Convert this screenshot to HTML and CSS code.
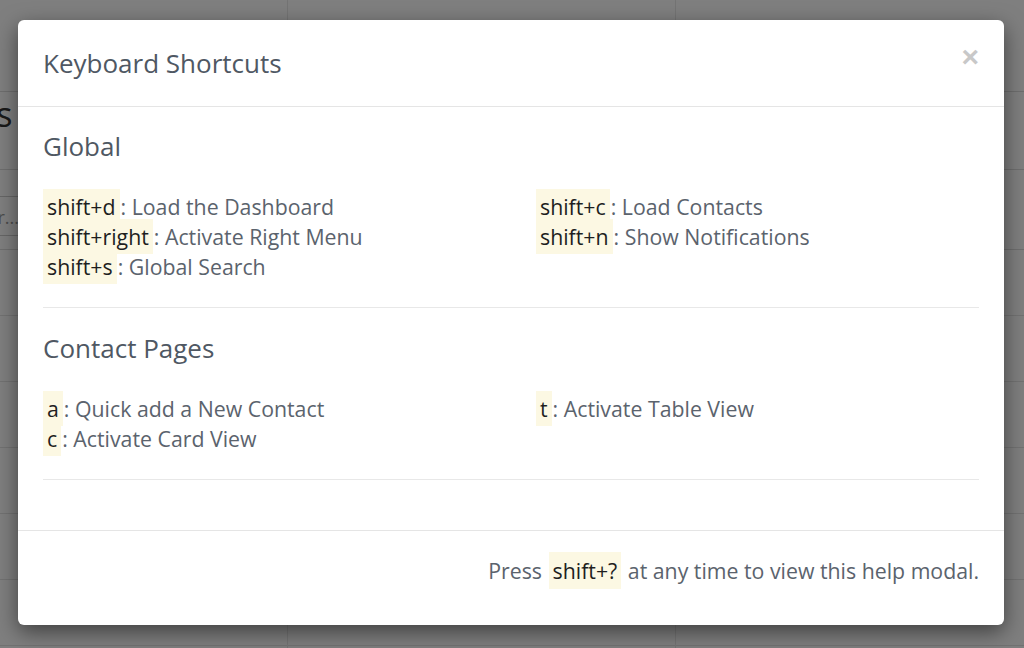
FILE: index.html
```html
<!DOCTYPE html>
<html lang="en">
<head>
<meta charset="utf-8">
<title>Keyboard Shortcuts</title>
<link rel="stylesheet" href="styles.css">
</head>
<body>
<div class="page">
  <div class="page-top"></div>
  <div class="page-title"><span>Contacts</span></div>
  <div class="page-filter"><span class="filter-input">Filter...</span></div>
  <div class="page-table">
    <div class="trow"></div>
    <div class="trow"></div>
    <div class="trow"></div>
    <div class="trow"></div>
    <div class="trow"></div>
    <div class="trow"></div>
  </div>
  <div class="page-cols">
    <div class="pcol"></div>
    <div class="pcol"></div>
    <div class="pcol"></div>
  </div>
</div>

<div class="backdrop">
  <div class="modal">
    <div class="modal-header">
      <h4 class="modal-title">Keyboard Shortcuts</h4>
      <span class="close">&times;</span>
    </div>
    <div class="modal-body">
      <section class="group">
        <h3 class="group-title">Global</h3>
        <div class="cols">
          <ul class="list">
            <li><mark class="key">shift+d</mark>: Load the Dashboard</li>
            <li><mark class="key">shift+right</mark>: Activate Right Menu</li>
            <li><mark class="key">shift+s</mark>: Global Search</li>
          </ul>
          <ul class="list">
            <li><mark class="key">shift+c</mark>: Load Contacts</li>
            <li><mark class="key">shift+n</mark>: Show Notifications</li>
          </ul>
        </div>
        <hr class="sep">
      </section>
      <section class="group">
        <h3 class="group-title">Contact Pages</h3>
        <div class="cols">
          <ul class="list">
            <li><mark class="key">a</mark>: Quick add a New Contact</li>
            <li><mark class="key">c</mark>: Activate Card View</li>
          </ul>
          <ul class="list">
            <li><mark class="key">t</mark>: Activate Table View</li>
          </ul>
        </div>
        <hr class="sep">
      </section>
    </div>
    <div class="modal-footer">
      Press <mark class="key foot-key">shift+?</mark> at any time to view this help modal.
    </div>
  </div>
</div>
</body>
</html>
```

FILE: styles.css
```css
* { box-sizing: border-box; }

html, body {
  margin: 0;
  padding: 0;
  width: 1024px;
  height: 648px;
  overflow: hidden;
}

body {
  font-family: "Open Sans", "Liberation Sans", sans-serif;
  background: #ffffff;
  color: #333;
  position: relative;
}

/* ---------- underlying page (dimmed) ---------- */
.page {
  width: 1024px;
  height: 648px;
  background: #fff;
}
.page-top {
  height: 92px;
  border-bottom: 1px solid #ddd;
}
.page-title {
  height: 78px;
  border-bottom: 1px solid #ddd;
  font-size: 34px;
  line-height: 40px;
  color: #333;
  padding-top: 2px;
  margin-left: -126px;
}
.page-filter {
  height: 80px;
  padding-top: 26px;
  border-bottom: 1px solid #ddd;
  margin-left: -50px;
}
.filter-input {
  display: inline-block;
  width: 80px;
  height: 40px;
  border: 1px solid #ccc;
  border-radius: 4px;
  font-size: 18px;
  color: #999;
  padding: 8px 10px;
  text-align: right;
}
.trow {
  height: 66px;
  border-bottom: 1px solid #e4e4e4;
}
.page-cols {
  position: absolute;
  left: 0;
  top: 0;
  width: 1024px;
  height: 648px;
  display: grid;
  grid-template-columns: 288px 388px 1fr;
  pointer-events: none;
}
.pcol { border-right: 1px solid #e8e8e8; }
.pcol:last-child { border-right: 0; }

/* ---------- backdrop ---------- */
.backdrop {
  position: absolute;
  inset: 0;
  background: rgba(0, 0, 0, 0.5);
  padding-top: 20px;
}

.modal {
  width: 986px;
  height: 605px;
  margin: 0 0 0 18px;
  background: #fff;
  border-radius: 6px;
  box-shadow: 0 7px 21px rgba(0, 0, 0, 0.5);
  display: flex;
  flex-direction: column;
}

.modal-header {
  height: 87px;
  border-bottom: 1px solid #e5e5e5;
  padding: 25px 25px 0;
  display: flex;
  justify-content: space-between;
  align-items: flex-start;
}
.modal-title {
  margin: 0;
  font-size: 26px;
  font-weight: 400;
  line-height: 36px;
  color: #4f5863;
}
.close {
  font-family: "Liberation Sans", "Open Sans", sans-serif;
  font-size: 30px;
  font-weight: 700;
  line-height: 1;
  color: #c8c8c8;
  margin-top: -3px;
  margin-right: 0;
}

.modal-body {
  flex: 1;
  padding: 24px 25px 0;
}

.group-title {
  margin: 0;
  font-size: 26px;
  font-weight: 400;
  line-height: 30px;
  color: #4f5863;
}

.cols {
  display: grid;
  grid-template-columns: 493px 1fr;
  margin-top: 31px;
}

.list {
  list-style: none;
  margin: 0;
  padding: 0;
}
.list li {
  font-size: 21.3px;
  line-height: 30px;
  color: #5b636d;
  white-space: nowrap;
}

.key {
  background: #fcf8e3;
  color: #1e1e1e;
  padding: 3px 4px;
  margin-right: 1px;
}

.sep {
  border: 0;
  border-top: 1px solid #e8e8e8;
  margin: 25px 0;
}

.modal-footer {
  height: 95px;
  border-top: 1px solid #e5e5e5;
  padding: 25px 25px 0;
  text-align: right;
  font-size: 21.3px;
  line-height: 29px;
  color: #5b636d;
}
.foot-key {
  padding: 4px 4px;
  margin: 0 1px;
}
```
